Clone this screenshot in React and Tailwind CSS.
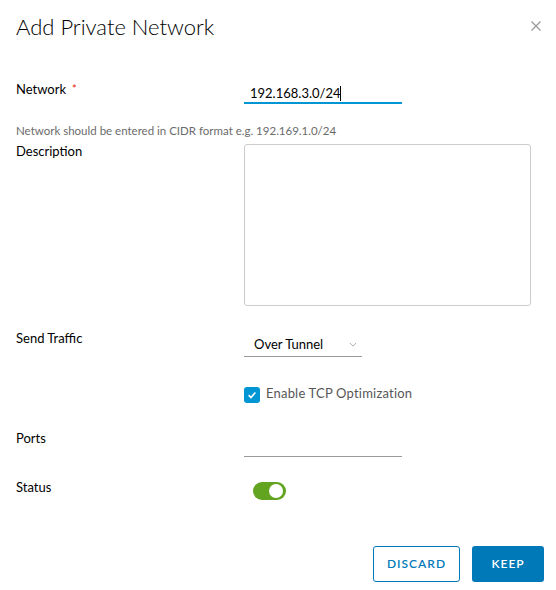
import React from 'react'

const font = { fontFamily: 'Lato, "Open Sans", sans-serif' }

function Row({ label, required, className = '', children }) {
  return (
    <div className={`flex ${className}`}>
      <div className="w-[228px] shrink-0 text-[13px] text-[#000] leading-[18px]">
        {label}
        {required && <span className="ml-[6px] text-[11px] text-[#e12200] align-top">*</span>}
      </div>
      <div className="flex-1">{children}</div>
    </div>
  )
}

export default function App() {
  return (
    <div className="w-[556px] h-[590px] bg-white relative" style={font}>
      {/* Header */}
      <div className="flex items-start justify-between pl-[16px] pr-[14px] pt-[12px]">
        <h1 className="text-[22px] leading-[30px] text-[#000] font-light">Add Private Network</h1>
        <button className="mt-[8px] text-[#999] w-[12px] h-[12px]">
          <svg viewBox="0 0 12 12" className="w-[12px] h-[12px]" stroke="currentColor" strokeWidth="1.2">
            <path d="M1.5 1.5 L10.5 10.5 M10.5 1.5 L1.5 10.5" />
          </svg>
        </button>
      </div>

      <div className="pl-[16px] pr-[25px]">
        {/* Network */}
        <Row label="Network" required className="mt-[38px]">
          <div className="w-[158px] h-[22px] border-b-2 border-[#0095d3] pl-[6px] text-[13px] leading-[22px] text-[#000] mt-[2px]">
            192.168.3.0/24<span className="inline-block w-px h-[15px] bg-black align-[-3px]"></span>
          </div>
        </Row>

        <div className="mt-[19px] text-[11.5px] leading-[16px] text-[#6b6b6b]">
          Network should be entered in CIDR format e.g. 192.169.1.0/24
        </div>

        {/* Description */}
        <Row label="Description" className="mt-[3px]">
          <div className="h-[162px] border border-[#ccc] rounded-[3px] mt-[2px]"></div>
        </Row>

        {/* Send Traffic */}
        <Row label="Send Traffic" className="mt-[23px]">
          <div className="w-[118px] h-[24px] border-b border-[#9a9a9a] flex items-center justify-between pl-[10px] pr-[5px] mt-[4px]">
            <span className="text-[13px] text-[#000]">Over Tunnel</span>
            <svg viewBox="0 0 10 6" className="w-[8px] h-[5px] text-[#999]" fill="none" stroke="currentColor" strokeWidth="1">
              <path d="M1 1 L5 5 L9 1" />
            </svg>
          </div>
        </Row>

        {/* Checkbox */}
        <div className="flex mt-[28px]">
          <div className="w-[228px] shrink-0"></div>
          <label className="flex items-start gap-[6px]">
            <span className="mt-[2px] w-[16px] h-[16px] rounded-[3px] bg-[#0095d3] flex items-center justify-center">
              <svg viewBox="0 0 12 12" className="w-[10px] h-[10px]" fill="none" stroke="white" strokeWidth="2">
                <path d="M2 6.2 L4.8 9 L10 3" />
              </svg>
            </span>
            <span className="text-[13px] leading-[16px] text-[#565656] tracking-[0.2px]">Enable TCP Optimization</span>
          </label>
        </div>

        {/* Ports */}
        <Row label="Ports" className="mt-[26px]">
          <div className="w-[158px] h-[29px] border-b border-[#9a9a9a] mt-[-1px]"></div>
        </Row>

        {/* Status */}
        <Row label="Status" className="mt-[21px]">
          <div className="ml-[9px] w-[33px] h-[18px] rounded-full bg-[#62a420] relative mt-[4px]">
            <span className="absolute right-[3px] top-[2px] w-[14px] h-[14px] rounded-full bg-white"></span>
          </div>
        </Row>
      </div>

      {/* Footer */}
      <div className="flex justify-end gap-[12px] pr-[12px] mt-[46px]">
        <button className="w-[87px] h-[36px] border border-[#0079b8] rounded-[3px] text-[#0079b8] text-[12px] font-semibold tracking-[1px]">
          DISCARD
        </button>
        <button className="w-[72px] h-[36px] bg-[#0079b8] rounded-[3px] text-white text-[12px] font-semibold tracking-[1px]">
          KEEP
        </button>
      </div>
    </div>
  )
}
